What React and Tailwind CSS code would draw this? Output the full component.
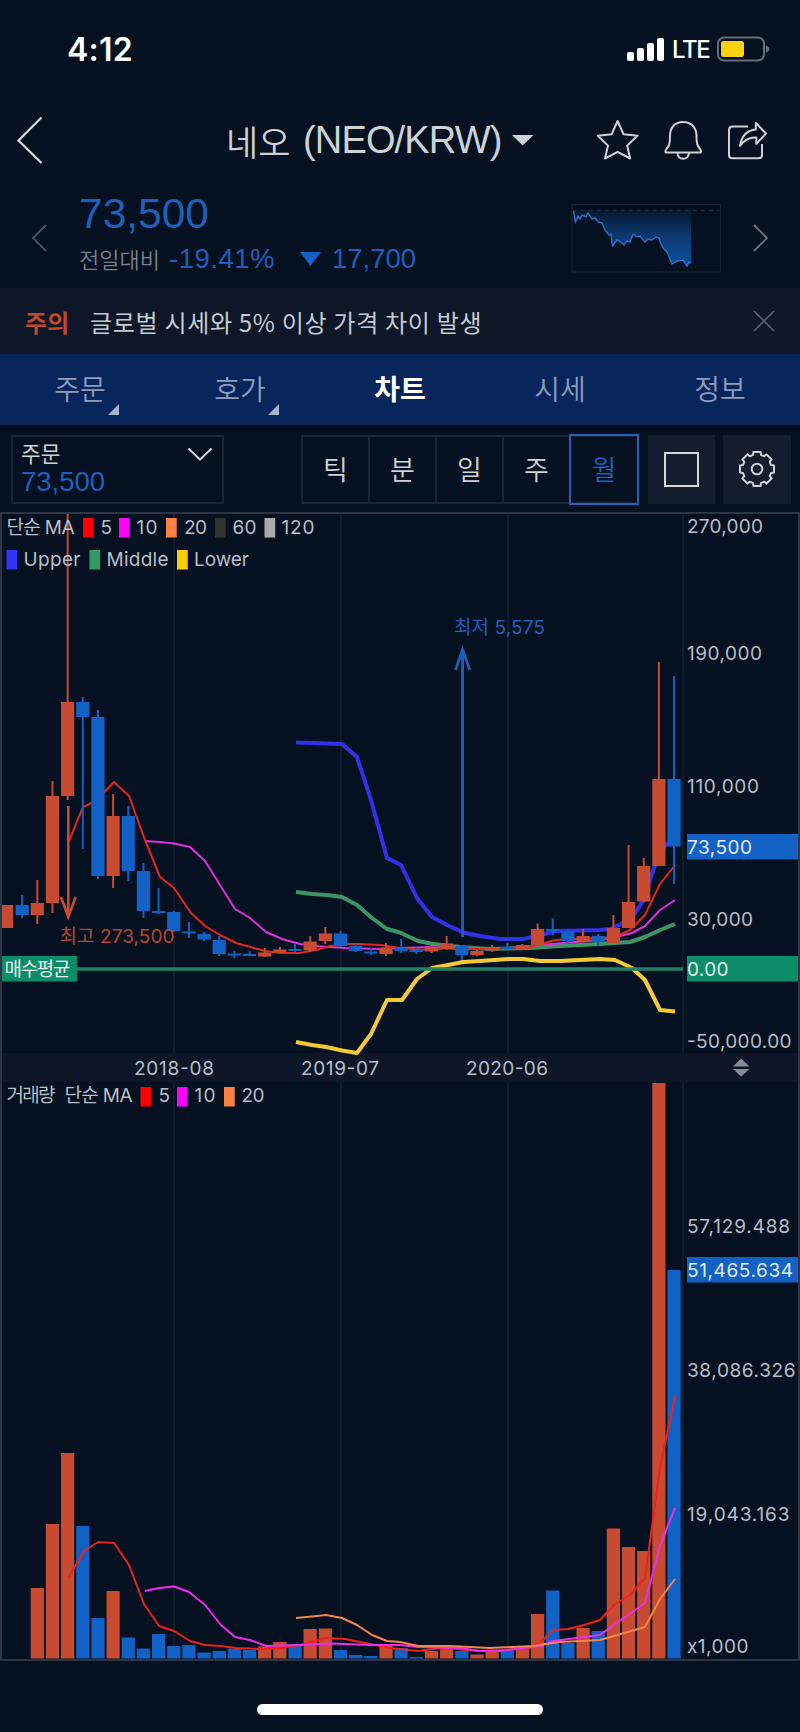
import clsx from "clsx";

const RISE = "#c84b31";
const FALL = "#1261c4";

const TABS = [
  { label: "주문", more: true },
  { label: "호가", more: true },
  { label: "차트", active: true },
  { label: "시세" },
  { label: "정보" },
];

const PERIODS = ["틱", "분", "일", "주", "월"];

// [direction, high, body top, body bottom, low]
const CANDLES = [
  [1, 905, 905, 928, 928],
  [0, 895, 905, 915, 918],
  [1, 880, 903, 915, 924],
  [1, 781, 796, 903, 913],
  [1, 514, 702, 796, 800],
  [0, 697, 702, 717, 849],
  [0, 710, 717, 876, 879],
  [1, 794, 816, 876, 888],
  [0, 806, 816, 871, 881],
  [0, 863, 871, 911, 918],
  [0, 888, 911, 913, 914],
  [0, 911, 912, 931, 932],
  [0, 922, 931.5, 933.5, 938],
  [0, 932, 934, 939.5, 941],
  [0, 936, 940, 954, 956],
  [0, 951, 953.5, 955.5, 958.5],
  [0, 951, 954, 956, 956],
  [1, 948, 952.5, 956.5, 957],
  [1, 947, 949.5, 952.5, 953],
  [0, 944, 949, 951, 952],
  [1, 936, 941.5, 950.5, 952],
  [1, 927, 933.5, 941, 944],
  [0, 931, 933.5, 946, 947],
  [0, 944, 946, 951, 952],
  [0, 948, 951.5, 953.5, 955],
  [1, 943, 947.5, 954, 956],
  [0, 939, 948, 951, 953],
  [0, 947, 949, 952, 954],
  [1, 945, 947.5, 951.5, 953],
  [1, 936, 943.5, 949, 950],
  [0, 945, 946, 955, 960],
  [1, 950, 951, 955, 956],
  [1, 945, 947.5, 950.5, 952],
  [0, 943, 947, 949, 949],
  [1, 944, 945, 949, 950],
  [1, 923.5, 929, 945, 946],
  [0, 918.5, 929, 931, 935],
  [0, 929.5, 931, 941, 943],
  [1, 929, 936, 941, 944],
  [0, 934, 936, 942, 946],
  [1, 915, 928, 943, 943],
  [1, 845, 902, 928, 928],
  [1, 858, 866, 901.5, 902],
  [1, 662, 779, 866, 866],
  [0, 676, 779, 846.5, 884],
];

const VOLUME_TOPS = [
  null, null, 1588, 1524, 1453, 1526, 1618, 1591, 1637.5, 1648.5, 1634, 1646, 1645,
  1652.5, 1651, 1648.5, 1650, 1646.5, 1642, 1644, 1629, 1628.5, 1650, 1655, 1656,
  1644, 1648, 1657, 1651, 1648, 1651, 1654.5, 1651, 1650, 1649, 1614, 1590.5, 1643,
  1628, 1631, 1528.5, 1547, 1551, 1083, 1270,
];

const PRICE_LINES = [
  {
    color: "#f5c933",
    width: 4,
    points:
      "296,1042 312,1045 326,1047 342,1050.5 357,1053 371,1034 387,1000 402,1000 417,979 432,968 448,965 463,962 480,961 508,959 523,959 540,961 560,961 600,959 615,960 632,968 645,980 660,1010 675,1011.5",
  },
  {
    color: "#3131ea",
    width: 4,
    points:
      "296,742.5 342,744 357,757 371,800 387,858 401,865 417,898 432,917 447,925 463,932.5 480,936 500,939 523,939 540,935.5 555,931 600,930 610,929 617,926 632,918 643,901 657,859 666,844 675,842",
  },
  {
    color: "#3c9565",
    width: 4,
    points:
      "296,892 312,894 327,895 342,897 357,905 372,918 387,929 400,932.5 418,941 433,944 460,947 490,949 530,948 560,946 600,944 630,942 645,937 660,930 675,924",
  },
  {
    color: "#e02ee0",
    width: 2,
    points:
      "145,841 160,842 174,843.5 190,847 205,861 220,885 235,909 250,918 266,932 282,939 300,944 315,946 345,948 380,949 400,948 430,947 460,949 500,949 540,945 600,940 620,936 632,933 645,926 660,910 675,900",
  },
  {
    color: "#e3241f",
    width: 2,
    points:
      "69,841 83,807 96,801 114,782 129,796 145,840 160,877 174,888 191,913 205,926 220,935 236,943 250,947 265,951 280,953 300,953 316,950 330,946 345,944 360,944 380,945 400,948 430,950 446,948 461,949 500,949 530,947 545,943 555,940 575,939 600,938 615,937 630,930 645,915 660,884 675,865",
  },
];

const VOLUME_LINES = [
  {
    color: "#f02019",
    points:
      "69,1577 84,1551 98,1542 114,1543 129,1565 144,1604 159,1626 174,1631 190,1641 205,1645 220,1646 236,1648 260,1649 280,1648 300,1645 326,1638 345,1639 360,1642 375,1645 390,1648 400,1649 418,1651 433,1649 448,1648 465,1650 480,1651 500,1650 530,1648 541,1642 553,1630 568,1629 584,1625 600,1620 614,1605 630,1595 645,1578 660,1468 675,1396",
  },
  {
    color: "#ee2cee",
    points:
      "145,1591 159,1588 174,1586.5 189,1592 205,1605 221,1625 235,1637 250,1640 266,1646 300,1645 330,1643.5 370,1645 400,1645 418,1647 460,1648 480,1651 500,1651 540,1646 553,1641 600,1635 614,1625 645,1603 660,1546 675,1508",
  },
  {
    color: "#f58549",
    points:
      "296,1618 312,1616.5 326,1615 342,1618 357,1625 372,1635 387,1641 400,1642 418,1646 450,1646 490,1648 533,1646 560,1642 600,1640 614,1636 645,1627 660,1599 675,1579",
  },
];

const GRID_X = [174, 341, 508, 683];

const candleX = (i) => 6.8 + i * 15.16;

function gearPath(cx, cy) {
  const at = (r, deg) => {
    const a = (deg * Math.PI) / 180;
    return `${(cx + r * Math.cos(a)).toFixed(2)} ${(cy + r * Math.sin(a)).toFixed(2)}`;
  };
  const pts = [];
  for (let k = 0; k < 8; k++) {
    const a = k * 45;
    pts.push(at(14.6, a - 15.5), at(17.4, a - 12), at(17.4, a + 12), at(14.6, a + 15.5));
  }
  return `M${pts.join("L")}Z`;
}

function StatusBar() {
  return (
    <div className="flex h-[98px] items-center justify-between pl-[67px] pr-[30px]">
      <span className="pt-px font-[Inter] text-[32px] font-semibold leading-none tracking-[0.2px] text-white">
        4:12
      </span>
      <div className="flex items-center">
        <svg width="38" height="24" viewBox="626 37 38 24" fill="#fff">
          <rect x="627" y="52" width="7" height="9" rx="2" />
          <rect x="637" y="48" width="7" height="13" rx="2" />
          <rect x="647" y="43" width="7" height="18" rx="2" />
          <rect x="657" y="38" width="7" height="23" rx="2" />
        </svg>
        <span className="ml-[8px] w-[38px] pt-px font-[Inter] text-[24px] font-medium leading-none tracking-[-1.4px] text-white">
          LTE
        </span>
        <svg className="ml-[7px]" width="53" height="26" viewBox="717 36 53 26">
          <rect x="718" y="37.5" width="46" height="23" rx="6" fill="none" stroke="#666e79" strokeWidth="2" />
          <rect x="721" y="41" width="23" height="16" rx="2.5" fill="#fdd210" />
          <path d="M766 45.500Q769.500 47 769.500 49T766 53Z" fill="#666e79" />
        </svg>
      </div>
    </div>
  );
}

function Header() {
  return (
    <div className="flex h-[84px] items-center pl-4 pr-[32px]">
      <svg width="28" height="48" viewBox="16 116 28 48" fill="none" stroke="#dcdee1" strokeWidth="2.200">
        <path d="M41.500 117.500 18.500 140.500 41.500 163" />
      </svg>
      <div className="ml-[182px] flex flex-1 items-center whitespace-nowrap text-[#ced1d5]">
        <span className="w-[77px] text-[35px] font-[350] leading-none">네오</span>
        <span className="w-[201px] font-['Liberation_Sans'] text-[38px] leading-none tracking-[-0.85px]">
          (NEO/KRW)
        </span>
        <svg className="ml-[8px]" width="22" height="12" viewBox="512 135 22 12" fill="#ced1d5">
          <path d="M512 136h21.500L522.700 146.500Z" />
        </svg>
      </div>
      <div className="flex items-center gap-[24px]">
        <svg width="43" height="42" viewBox="596 119 43 42" fill="none" stroke="#ced1d5" strokeWidth="2" strokeLinejoin="round">
          <path d="M617.600 121 623.500 134.200 637.500 135.800 627.200 145.600 630.200 158.500 617.600 151.800 605 158.500 608 145.600 597.800 135.800 611.700 134.200Z" />
        </svg>
        <svg width="40" height="42" viewBox="663 119 40 42" fill="none" stroke="#ced1d5" strokeWidth="2" strokeLinejoin="round">
          <path d="M683 122C674 122 670 128.500 670 136C670 144 669 146 666.500 149C665 151 665 152.500 666.500 152.500H700C701.500 152.500 701.300 151 700 149C697.500 146 696.500 144 696.500 136C696.500 128.500 692 122 683 122Z" />
          <path d="M677.500 153Q678 158.800 683.200 158.800T689 153" />
        </svg>
        <svg width="41" height="42" viewBox="726 119 41 42" fill="none" stroke="#ced1d5" strokeWidth="2" strokeLinejoin="round">
          <path d="M747 126.500H731.500Q728 126.500 728 130V155Q728 158.300 731.500 158.300H757.500Q761 158.300 761 155V144" />
          <path d="M754.800 123 765 133.500 755.300 143.800V137.500Q745 137 739 146Q741.500 130.500 754.800 129.500Z" />
        </svg>
      </div>
    </div>
  );
}

function Sparkline() {
  const line =
    "573.500,211 575.500,222 578,216 580,219 582,215 586,217 588,213 592,219 595,218 598,222 602,223 605,230 609,235 611,234 612.500,246 617,240 621,242 624,245 627,241 630,242 633,234 637,237 640,236 645,242 648,239 652,240 656,237 659,238 660.500,243 664,249 667,252 672,264 677,261 683,260 685,263 687,266 689,262 691,263";
  return (
    <svg width="150" height="69" viewBox="571 204 150 69">
      <defs>
        <linearGradient id="spark" x1="0" y1="0" x2="0" y2="1">
          <stop offset="0" stopColor="#0e4f9e" stopOpacity="0.1" />
          <stop offset="0.6" stopColor="#0e4488" stopOpacity="0.9" />
          <stop offset="1" stopColor="#0e4f9e" />
        </linearGradient>
      </defs>
      <rect x="572" y="204.500" width="148.500" height="67.500" fill="none" stroke="#1b2532" />
      <polygon points={`${line} 691,210 573.500,210`} fill="url(#spark)" />
      <path d="M573 210.500H719" stroke="#1d2c3f" strokeDasharray="4 4" />
      <polyline points={line} fill="none" stroke="#2b6fc6" strokeWidth="1.400" />
    </svg>
  );
}

function PriceSummary() {
  return (
    <div className="flex h-[106px] items-end pb-[15px] pl-[32px] pr-[32px]">
      <svg className="mb-[21px]" width="15" height="28" viewBox="32 224 15 28" fill="none" stroke="#4a5361" strokeWidth="1.800">
        <path d="M46 225 33 238 46 251" />
      </svg>
      <div className="-mb-px ml-[32px] flex-1 text-[#1f5fb9]">
        <div className="font-['Liberation_Sans'] text-[42.500px] leading-[48px]">73,500</div>
        <div className="mt-[6px] flex h-[30px] items-center whitespace-nowrap">
          <span className="w-[90px] pb-[2px] text-[22px] font-[350] leading-none text-[#7a818c]">전일대비</span>
          <span className="w-[131px] font-['Liberation_Sans'] text-[27.500px] leading-none tracking-[0.5px]">-19.41%</span>
          <svg width="21" height="14" viewBox="0 0 21 14" fill={FALL}>
            <path d="M0 0h21L10.500 14Z" />
          </svg>
          <span className="ml-[11px] font-['Liberation_Sans'] text-[27.500px] leading-none">17,700</span>
        </div>
      </div>
      <Sparkline />
      <svg className="mb-[21px] ml-[32px]" width="15" height="28" viewBox="753 224 15 28" fill="none" stroke="#6a717c" strokeWidth="1.800">
        <path d="M754 225 767 238 754 251" />
      </svg>
    </div>
  );
}

function Notice() {
  return (
    <div className="flex h-[66px] items-center bg-[#0d1728] pl-[25px] pr-[25px]">
      <span className="w-[65px] pt-[2px] text-[24px] font-bold leading-none text-[#c2492f]">주의</span>
      <span className="flex-1 whitespace-nowrap pt-[2px] text-[24px] leading-none tracking-[0.7px] text-[#c5c9d0]">
        글로벌 시세와 5% 이상 가격 차이 발생
      </span>
      <svg width="22" height="22" viewBox="0 0 22 22" stroke="#59616e" strokeWidth="1.600">
        <path d="M1 1 21 21M21 1 1 21" />
      </svg>
    </div>
  );
}

function Tabs() {
  return (
    <div className="grid h-[71px] grid-cols-5 bg-[#06265b]">
      {TABS.map((tab) => (
        <div key={tab.label} className="relative flex items-center justify-center pb-1">
          <span
            className={clsx(
              "text-[28px] leading-none",
              tab.active ? "font-bold text-white" : "font-[350] text-[#8c9cbf]"
            )}
          >
            {tab.label}
          </span>
          {tab.more && (
            <svg className="absolute bottom-[10px] right-[41px]" width="11" height="11" fill="#a9b4cc">
              <path d="M11 0V11H0Z" />
            </svg>
          )}
        </div>
      ))}
    </div>
  );
}

function Toolbar() {
  return (
    <div className="flex h-[87px] items-start pl-[11px] pt-[10px]">
      <div className="flex h-[69px] w-[213px] justify-between border-2 border-[#1a2433] pl-[8px] pr-[9px] pt-[5px]">
        <div className="flex flex-col">
          <span className="text-[21.500px] leading-[22px] text-[#ced1d5]">주문</span>
          <span className="mt-[3px] font-['Liberation_Sans'] text-[27.500px] leading-[30px] text-[#1f5fb9]">73,500</span>
        </div>
        <svg className="mt-[5px]" width="26" height="15" fill="none" stroke="#ced1d5" strokeWidth="2">
          <path d="M1.500 1.500 13 12.500 24.500 1.500" />
        </svg>
      </div>
      <div className="ml-[77px] flex h-[69px] w-[338px] border-2 border-r-0 border-[#1a2433]">
        {PERIODS.map((period) => (
          <div
            key={period}
            className={clsx(
              "flex items-center justify-center pb-[2px] text-[27px] font-[350] leading-none",
              period === "월"
                ? "-my-[3px] -ml-[2px] w-[70px] border-2 border-[#2560b8] text-[#1f5fb9]"
                : "flex-1 border-r-2 border-[#1a2433] text-[#ced1d5]"
            )}
          >
            {period}
          </div>
        ))}
      </div>
      <div className="ml-[9px] flex h-[69px] w-[67px] items-center justify-center bg-[#131d2e]">
        <div className="h-[35px] w-[35px] border-2 border-[#d5d7da]" />
      </div>
      <div className="ml-[8px] flex h-[69px] w-[68px] items-center justify-center bg-[#131d2e]">
        <svg className="-mt-px" width="38" height="38" fill="none" stroke="#ced1d5" strokeWidth="2" strokeLinejoin="round">
          <path d={gearPath(19, 19)} />
          <circle cx="19" cy="19" r="5.300" />
        </svg>
      </div>
    </div>
  );
}

function Label({ x, y, w, children, color = "#b9bec6" }) {
  return (
    <text x={x - 0.5} y={y} textLength={w} fill={color}>
      {children}
    </text>
  );
}

function Swatch({ x, y, color }) {
  return <rect x={x} y={y} width="10.700" height="19.500" fill={color} />;
}

function PriceChart() {
  return (
    <svg className="relative block overflow-visible font-[Inter,'Noto_Sans_CJK_KR',sans-serif] text-[19px]" width="796" height="539" viewBox="2 514 796 539">
      {GRID_X.map((x) => (
        <path key={x} d={`M${x} 514V1053`} stroke="#101c2c" strokeWidth="2" />
      ))}

      {PRICE_LINES.map((line) => (
        <polyline key={line.color} points={line.points} fill="none" stroke={line.color} strokeWidth={line.width} strokeLinejoin="round" />
      ))}

      {CANDLES.map(([up, high, top, bottom, low], i) => (
        <g key={i} fill={up ? RISE : FALL}>
          <rect x={candleX(i) - 0.8} y={high} width="2" height={low - high} />
          <rect x={Math.max(candleX(i) - 6.4, 2)} y={top} width={i === 0 ? 11 : 13.2} height={bottom - top} />
        </g>
      ))}

      <path d="M2 969H683" stroke="#1f8067" strokeWidth="3.500" />

      <g fill="none" stroke={RISE} strokeWidth="2.600">
        <path d="M68.300 806V916M61 897 68.300 917 75.600 897" />
      </g>
      <g fill="none" stroke="#1d5fba" strokeWidth="2.800">
        <path d="M462.600 937V651M455.500 670 462.600 649.500 469.800 670" />
      </g>
      <Label x={60} y={943} w={115} color="#b8452f">최고 273,500</Label>
      <Label x={454.500} y={634} w={91} color="#1f5fb9">최저 5,575</Label>

      <rect x="2" y="956" width="75" height="25.500" fill="#0b8d69" />
      <Label x={5} y={975.500} w={66} color="#e8f4f0">매수평균</Label>

      <Label x={7} y={534} w={68}>단순 MA</Label>
      <Swatch x={83} y={518} color="#ff0000" />
      <Label x={101} y={534} w={11}>5</Label>
      <Swatch x={119} y={518} color="#ff00ff" />
      <Label x={137} y={534} w={21}>10</Label>
      <Swatch x={166} y={518} color="#ff8040" />
      <Label x={184.500} y={534} w={23}>20</Label>
      <Swatch x={215} y={518} color="#333333" />
      <Label x={233} y={534} w={24}>60</Label>
      <Swatch x={264.500} y={518} color="#aaaaaa" />
      <Label x={282} y={534} w={33}>120</Label>

      <Swatch x={6.500} y={550} color="#3333ff" />
      <Label x={24} y={566} w={57}>Upper</Label>
      <Swatch x={89.500} y={550} color="#339966" />
      <Label x={107} y={566} w={62}>Middle</Label>
      <Swatch x={177} y={550} color="#ffcc00" />
      <Label x={194.500} y={566} w={55}>Lower</Label>

      <rect x="687" y="834" width="111" height="25.500" fill={FALL} />
      <rect x="687" y="956" width="111" height="25.500" fill="#0b8d69" />
      <Label x={687.500} y={533} w={76}>270,000</Label>
      <Label x={687.500} y={660} w={75}>190,000</Label>
      <Label x={687.500} y={793} w={72}>110,000</Label>
      <Label x={687.500} y={854} w={65} color="#e6ecf5">73,500</Label>
      <Label x={687.500} y={926} w={66}>30,000</Label>
      <Label x={687.500} y={976} w={41.500} color="#e8f4f0">0.00</Label>
      <Label x={687.500} y={1048} w={104.500}>-50,000.00</Label>
    </svg>
  );
}

function DateAxis() {
  return (
    <svg className="block bg-[#0c1626] font-[Inter,sans-serif] text-[19px]" width="796" height="29" viewBox="2 1053 796 29">
      <Label x={134.500} y={1074.500} w={80}>2018-08</Label>
      <Label x={301.500} y={1074.500} w={78}>2019-07</Label>
      <Label x={466.500} y={1074.500} w={82}>2020-06</Label>
      <path d="M733 1066.500 741.200 1058.500 749.500 1066.500ZM733 1069 741.200 1076.500 749.500 1069Z" fill="#858c96" />
    </svg>
  );
}

function VolumeChart() {
  return (
    <svg className="block font-[Inter,'Noto_Sans_CJK_KR',sans-serif] text-[19px]" width="796" height="577" viewBox="2 1082 796 577">
      {GRID_X.map((x) => (
        <path key={x} d={`M${x} 1082V1659`} stroke="#101c2c" strokeWidth="2" />
      ))}

      {VOLUME_TOPS.map(
        (top, i) =>
          top !== null && (
            <rect key={i} x={candleX(i) - 6.4} y={top} width="13.200" height={1658.5 - top} fill={CANDLES[i][0] ? RISE : FALL} />
          )
      )}

      {VOLUME_LINES.map((line) => (
        <polyline key={line.color} points={line.points} fill="none" stroke={line.color} strokeWidth="2" strokeLinejoin="round" />
      ))}

      <Label x={7} y={1102} w={49}>거래량</Label>
      <Label x={65} y={1102} w={68}>단순 MA</Label>
      <Swatch x={140.500} y={1087} color="#ff0000" />
      <Label x={159} y={1102} w={11}>5</Label>
      <Swatch x={177} y={1087} color="#ff00ff" />
      <Label x={195} y={1102} w={21}>10</Label>
      <Swatch x={224} y={1087} color="#ff8040" />
      <Label x={242} y={1102} w={23}>20</Label>

      <rect x="687" y="1257" width="111" height="25.500" fill={FALL} />
      <Label x={687.500} y={1233} w={103}>57,129.488</Label>
      <Label x={687.500} y={1277} w={106} color="#e6ecf5">51,465.634</Label>
      <Label x={687.500} y={1377} w={108.500}>38,086.326</Label>
      <Label x={687.500} y={1521} w={102.500}>19,043.163</Label>
      <Label x={687.500} y={1652.500} w={61.500}>x1,000</Label>
    </svg>
  );
}

export default function App() {
  return (
    <div className="h-[1732px] w-[800px] overflow-hidden bg-[#051120] font-['Noto_Sans_CJK_KR',sans-serif]">
      <StatusBar />
      <Header />
      <PriceSummary />
      <Notice />
      <Tabs />
      <Toolbar />
      <div className="border-2 border-[#2c3544]">
        <PriceChart />
        <DateAxis />
        <VolumeChart />
      </div>
      <div className="flex justify-center pt-[43px]">
        <div className="h-[11px] w-[286px] rounded-full bg-white" />
      </div>
    </div>
  );
}
